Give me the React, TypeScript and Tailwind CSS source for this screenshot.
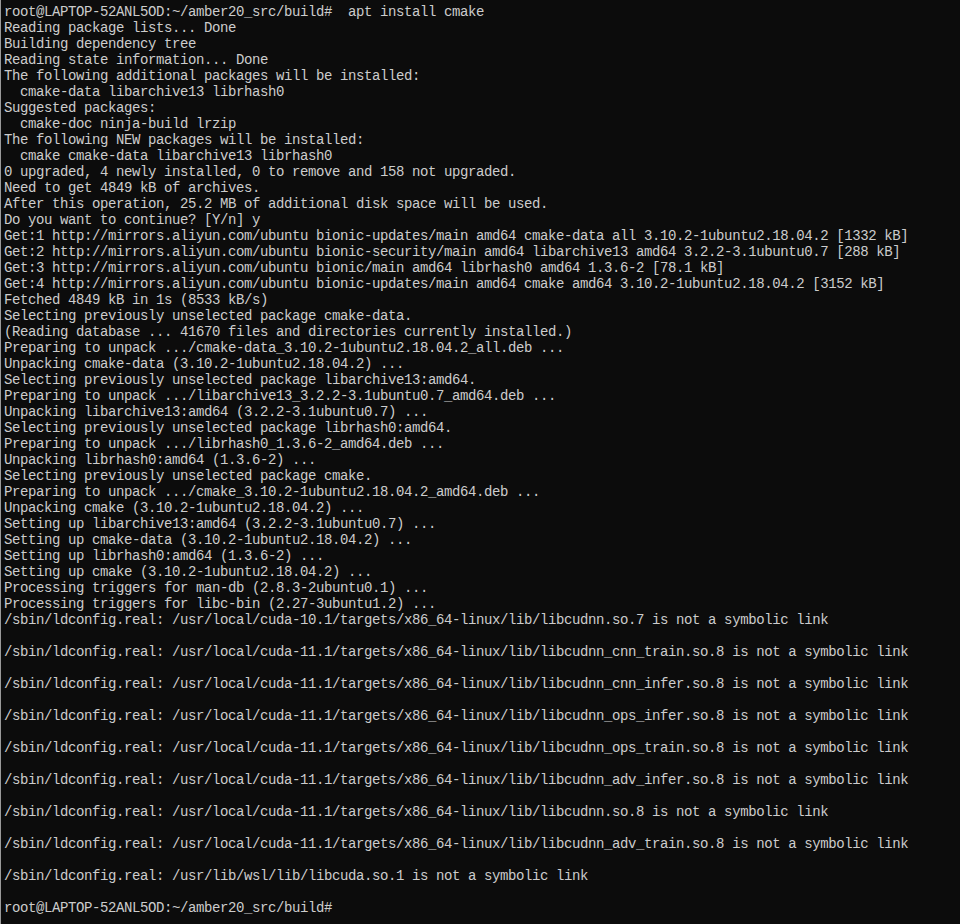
const lines: string[] = [
  "root@LAPTOP-52ANL5OD:~/amber20_src/build#  apt install cmake",
  "Reading package lists... Done",
  "Building dependency tree",
  "Reading state information... Done",
  "The following additional packages will be installed:",
  "  cmake-data libarchive13 librhash0",
  "Suggested packages:",
  "  cmake-doc ninja-build lrzip",
  "The following NEW packages will be installed:",
  "  cmake cmake-data libarchive13 librhash0",
  "0 upgraded, 4 newly installed, 0 to remove and 158 not upgraded.",
  "Need to get 4849 kB of archives.",
  "After this operation, 25.2 MB of additional disk space will be used.",
  "Do you want to continue? [Y/n] y",
  "Get:1 http://mirrors.aliyun.com/ubuntu bionic-updates/main amd64 cmake-data all 3.10.2-1ubuntu2.18.04.2 [1332 kB]",
  "Get:2 http://mirrors.aliyun.com/ubuntu bionic-security/main amd64 libarchive13 amd64 3.2.2-3.1ubuntu0.7 [288 kB]",
  "Get:3 http://mirrors.aliyun.com/ubuntu bionic/main amd64 librhash0 amd64 1.3.6-2 [78.1 kB]",
  "Get:4 http://mirrors.aliyun.com/ubuntu bionic-updates/main amd64 cmake amd64 3.10.2-1ubuntu2.18.04.2 [3152 kB]",
  "Fetched 4849 kB in 1s (8533 kB/s)",
  "Selecting previously unselected package cmake-data.",
  "(Reading database ... 41670 files and directories currently installed.)",
  "Preparing to unpack .../cmake-data_3.10.2-1ubuntu2.18.04.2_all.deb ...",
  "Unpacking cmake-data (3.10.2-1ubuntu2.18.04.2) ...",
  "Selecting previously unselected package libarchive13:amd64.",
  "Preparing to unpack .../libarchive13_3.2.2-3.1ubuntu0.7_amd64.deb ...",
  "Unpacking libarchive13:amd64 (3.2.2-3.1ubuntu0.7) ...",
  "Selecting previously unselected package librhash0:amd64.",
  "Preparing to unpack .../librhash0_1.3.6-2_amd64.deb ...",
  "Unpacking librhash0:amd64 (1.3.6-2) ...",
  "Selecting previously unselected package cmake.",
  "Preparing to unpack .../cmake_3.10.2-1ubuntu2.18.04.2_amd64.deb ...",
  "Unpacking cmake (3.10.2-1ubuntu2.18.04.2) ...",
  "Setting up libarchive13:amd64 (3.2.2-3.1ubuntu0.7) ...",
  "Setting up cmake-data (3.10.2-1ubuntu2.18.04.2) ...",
  "Setting up librhash0:amd64 (1.3.6-2) ...",
  "Setting up cmake (3.10.2-1ubuntu2.18.04.2) ...",
  "Processing triggers for man-db (2.8.3-2ubuntu0.1) ...",
  "Processing triggers for libc-bin (2.27-3ubuntu1.2) ...",
  "/sbin/ldconfig.real: /usr/local/cuda-10.1/targets/x86_64-linux/lib/libcudnn.so.7 is not a symbolic link",
  "",
  "/sbin/ldconfig.real: /usr/local/cuda-11.1/targets/x86_64-linux/lib/libcudnn_cnn_train.so.8 is not a symbolic link",
  "",
  "/sbin/ldconfig.real: /usr/local/cuda-11.1/targets/x86_64-linux/lib/libcudnn_cnn_infer.so.8 is not a symbolic link",
  "",
  "/sbin/ldconfig.real: /usr/local/cuda-11.1/targets/x86_64-linux/lib/libcudnn_ops_infer.so.8 is not a symbolic link",
  "",
  "/sbin/ldconfig.real: /usr/local/cuda-11.1/targets/x86_64-linux/lib/libcudnn_ops_train.so.8 is not a symbolic link",
  "",
  "/sbin/ldconfig.real: /usr/local/cuda-11.1/targets/x86_64-linux/lib/libcudnn_adv_infer.so.8 is not a symbolic link",
  "",
  "/sbin/ldconfig.real: /usr/local/cuda-11.1/targets/x86_64-linux/lib/libcudnn.so.8 is not a symbolic link",
  "",
  "/sbin/ldconfig.real: /usr/local/cuda-11.1/targets/x86_64-linux/lib/libcudnn_adv_train.so.8 is not a symbolic link",
  "",
  "/sbin/ldconfig.real: /usr/lib/wsl/lib/libcuda.so.1 is not a symbolic link",
  "",
  "root@LAPTOP-52ANL5OD:~/amber20_src/build#",
];

export default function App() {
  return (
    <div className="w-[960px] h-[924px] overflow-hidden bg-[#0c0c0c] border-l border-[#9a9a9a] pt-1 pl-[3px] font-['Liberation_Mono',monospace] text-[14px] tracking-[-0.4px] text-[#cccccc]">
      {lines.map((line, i) => (
        <div key={i} className="h-4 leading-4 whitespace-pre">
          {line}
        </div>
      ))}
    </div>
  );
}
